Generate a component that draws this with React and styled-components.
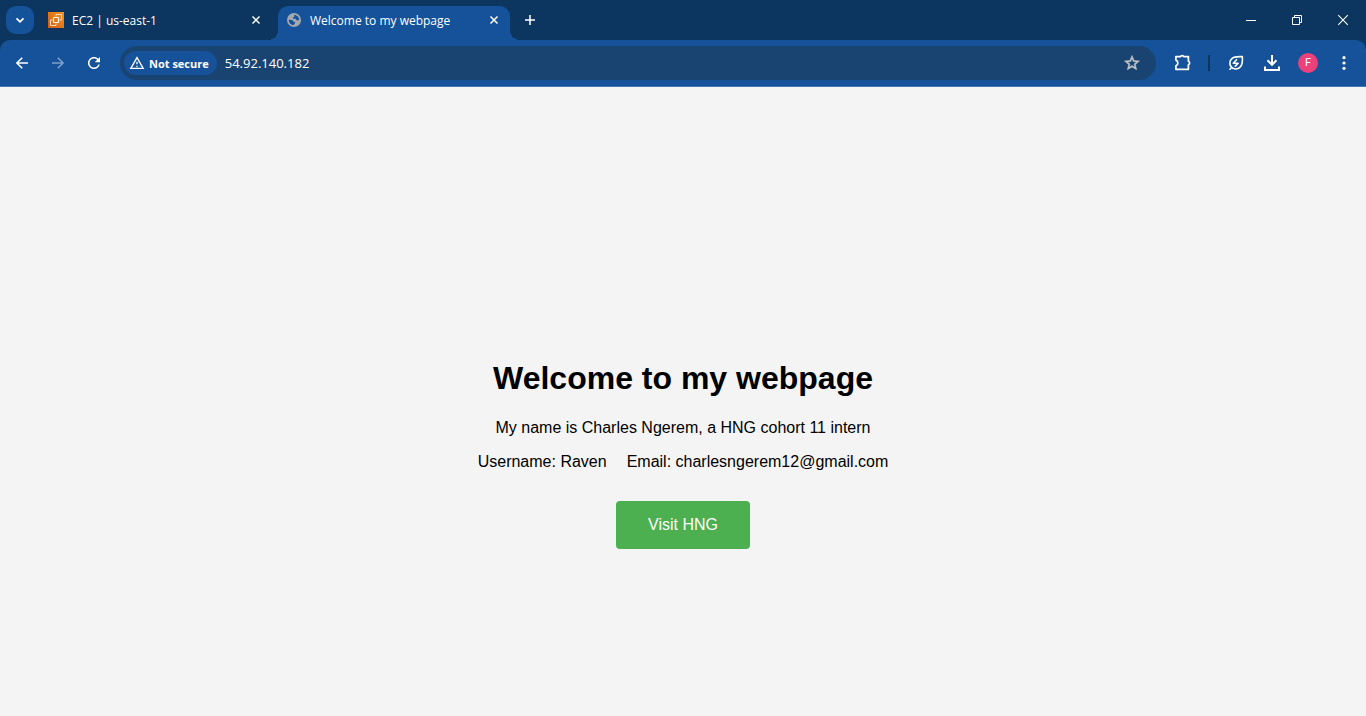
import React from "react";
import styled, { createGlobalStyle } from "styled-components";

const colors = {
  frame: "#0c355f",
  toolbar: "#155299",
  field: "#194471",
  line: "#4478b1",
  page: "#f4f4f4",
  green: "#4caf50",
};

const GlobalStyle = createGlobalStyle`
  * { box-sizing: border-box; }
  body { margin: 0; background: ${colors.page}; }
  button, input { font: inherit; color: inherit; border: 0; background: none; padding: 0; }
  button { cursor: pointer; }
`;

const Browser = styled.div`
  min-height: 100vh;
  display: flex;
  flex-direction: column;
  font-family: "Open Sans", "Noto Sans", sans-serif;
  font-size: 12px;
  color: #fff;
`;

const TabStrip = styled.header`
  display: flex;
  align-items: flex-end;
  height: 40px;
  padding-left: 6px;
  background: ${colors.frame};
`;

const TabSearch = styled.button`
  display: grid;
  place-items: center;
  width: 28px;
  height: 28px;
  margin: 0 6px 6px 0;
  border-radius: 10px;
  background: ${colors.toolbar};
`;

const TabList = styled.nav`
  display: flex;
  gap: 6px;
  min-width: 0;
`;

const Tab = styled.div`
  position: relative;
  display: flex;
  align-items: center;
  gap: 8px;
  width: 232px;
  height: 34px;
  padding: 0 8px 6px;
  border-radius: 10px 10px 0 0;
  background: ${(p) => (p.$active ? colors.toolbar : "transparent")};

  &::before,
  &::after {
    content: ${(p) => (p.$active ? '""' : "none")};
    position: absolute;
    bottom: 0;
    width: 10px;
    height: 10px;
  }
  &::before {
    left: -10px;
    background: radial-gradient(circle at 0 0, transparent 10px, ${colors.toolbar} 10px);
  }
  &::after {
    right: -10px;
    background: radial-gradient(circle at 100% 0, transparent 10px, ${colors.toolbar} 10px);
  }
`;

const TabTitle = styled.button`
  flex: 1;
  min-width: 0;
  overflow: hidden;
  padding-top: 2px;
  text-align: left;
  white-space: nowrap;
  line-height: 18px;
`;

const SmallButton = styled.button`
  display: grid;
  place-items: center;
  width: 16px;
  height: 16px;
`;

const NewTab = styled.button`
  display: grid;
  place-items: center;
  width: 28px;
  height: 28px;
  margin: 0 0 6px 6px;
`;

const WindowControls = styled.div`
  display: flex;
  margin-left: auto;
  align-self: stretch;
`;

const WindowButton = styled.button`
  display: grid;
  place-items: center;
  width: 46px;
  height: 40px;
`;

const ToolbarFrame = styled.div`
  background: ${colors.frame};
`;

const Toolbar = styled.div`
  display: flex;
  align-items: center;
  height: 47px;
  padding: 0 4px;
  border-bottom: 1px solid ${colors.line};
  border-radius: 10px 10px 0 0;
  background: ${colors.toolbar};
`;

const ToolButton = styled.button`
  display: grid;
  place-items: center;
  flex: none;
  width: 36px;
  height: 34px;
  opacity: ${(p) => (p.disabled ? 0.45 : 1)};
`;

const AddressBar = styled.form`
  display: flex;
  align-items: center;
  flex: 1;
  min-width: 0;
  height: 34px;
  margin: 0 9px 0 8px;
  padding: 0 6px 0 4px;
  border-radius: 17px;
  background: ${colors.field};
`;

const SecurityChip = styled.button`
  display: flex;
  align-items: center;
  gap: 4px;
  flex: none;
  height: 24px;
  padding: 0 8px 0 5px;
  border-radius: 12px;
  background: ${colors.toolbar};
  font-size: 11px;
  font-weight: 700;
`;

const AddressInput = styled.input`
  flex: 1;
  min-width: 0;
  margin-left: 8px;
  font-size: 13px;
  line-height: 18px;
  outline: none;
`;

const Divider = styled.span`
  width: 2px;
  height: 16px;
  margin: 0 8px 0 7px;
  background: ${colors.frame};
`;

const Avatar = styled.span`
  display: grid;
  place-items: center;
  width: 20px;
  height: 20px;
  border-radius: 50%;
  background: #ec407a;
  font: 11px/20px Roboto, sans-serif;
`;

const Page = styled.main`
  flex: 1;
  display: flex;
  flex-direction: column;
  align-items: center;
  justify-content: center;
  padding-top: 105px;
  background: ${colors.page};
  color: #000;
  font: 16px/18px "Liberation Sans", Arial, sans-serif;
  text-align: center;
`;

const Heading = styled.h1`
  margin: 0 0 23px;
  font-size: 32px;
  line-height: 36px;
`;

const Text = styled.p`
  margin: 0 0 16px;
`;

const Details = styled.div`
  display: flex;
  flex-wrap: wrap;
  justify-content: center;
  column-gap: 20px;
`;

const VisitLink = styled.a`
  margin-top: 14px;
  padding: 15px 32px;
  border-radius: 4px;
  background: ${colors.green};
  color: #fff;
  text-decoration: none;
`;

function StrokeIcon({ size = 20, width = 2, d, ...rest }) {
  return (
    <svg width={size} height={size} viewBox={`0 0 ${size} ${size}`} fill="none" stroke="currentColor" strokeWidth={width} aria-hidden="true" {...rest}>
      <path d={d} />
    </svg>
  );
}

function FillIcon({ size, d, color = "currentColor", ...rest }) {
  return (
    <svg width={size} height={size} viewBox="0 0 24 24" fill={color} aria-hidden="true" {...rest}>
      <path d={d} />
    </svg>
  );
}

const paths = {
  reload:
    "M17.65 6.35C16.2 4.9 14.21 4 12 4c-4.42 0-7.99 3.58-7.99 8s3.57 8 7.99 8c3.73 0 6.84-2.55 7.73-6h-2.08c-.82 2.33-3.04 4-5.65 4-3.31 0-6-2.69-6-6s2.69-6 6-6c1.66 0 3.14.69 4.22 1.78L13 11h7V4l-2.35 2.35z",
  warning: "M12 5.99L19.53 19H4.47L12 5.99M12 2L1 21h22L12 2zm1 14h-2v2h2v-2zm0-6h-2v4h2v-4z",
  star: "M22 9.24l-7.19-.62L12 2 9.19 8.63 2 9.24l5.46 4.73L5.82 21 12 17.27 18.18 21l-1.63-7.03L22 9.24zM12 15.4l-3.76 2.27 1-4.28-3.32-2.88 4.38-.38L12 6.1l1.71 4.04 4.38.38-3.32 2.88 1 4.28L12 15.4z",
};

function Ec2Icon() {
  return (
    <svg width="16" height="16" viewBox="0 0 16 16" fill="none" aria-hidden="true">
      <defs>
        <linearGradient id="ec2" x1="0" y1="1" x2="1" y2="0">
          <stop offset="0" stopColor="#d05c17" />
          <stop offset="1" stopColor="#f7931d" />
        </linearGradient>
      </defs>
      <path fill="url(#ec2)" d="M0 0h16v16H0z" />
      <path stroke="#f9d9b8" d="M8 4.500V2.500h5.500V8h-2M4.500 8h-2v5.500H8v-2" />
      <rect x="5.500" y="5.500" width="5" height="5" rx=".5" stroke="#fff1e2" strokeWidth="1.200" />
    </svg>
  );
}

function GlobeIcon() {
  return (
    <svg width="16" height="16" viewBox="0 0 16 16" aria-hidden="true">
      <circle cx="8" cy="8" r="7" fill="#a3a8af" />
      <path
        fill={colors.toolbar}
        d="M8.200 2.700c2.600.1 4.800 2.100 5.100 4.700l-1.500 1.100-1.400-.3-.5-1.400H7.300L6.900 5.400l1.600-.8zM2.700 7.800l3.700.3.700 1.500 2 .5-.3 1.500-1.600 1.600C4.700 12.900 2.700 10.700 2.700 7.800z"
      />
    </svg>
  );
}

const Close = () => <StrokeIcon size={16} width={1.5} d="M4.500 4.500l7 7M11.500 4.500l-7 7" />;

export default function App() {
  return (
    <>
      <GlobalStyle />
      <Browser>
        <TabStrip>
          <TabSearch aria-label="Search tabs">
            <StrokeIcon size={16} width={1.8} d="M4.500 6.300L8 9.800l3.500-3.500" />
          </TabSearch>
          <TabList>
            <Tab>
              <Ec2Icon />
              <TabTitle>EC2 | us-east-1</TabTitle>
              <SmallButton aria-label="Close tab"><Close /></SmallButton>
            </Tab>
            <Tab $active>
              <GlobeIcon />
              <TabTitle>Welcome to my webpage</TabTitle>
              <SmallButton aria-label="Close tab"><Close /></SmallButton>
            </Tab>
          </TabList>
          <NewTab aria-label="New tab">
            <StrokeIcon size={16} width={1.5} d="M8 3v10M3 8h10" />
          </NewTab>
          <WindowControls>
            <WindowButton aria-label="Minimize">
              <StrokeIcon size={16} width={1} d="M3 8.500h10" />
            </WindowButton>
            <WindowButton aria-label="Restore">
              <StrokeIcon size={16} width={1} d="M3.500 5.500h7v7h-7zM5.500 5.500v-2h7v7h-2" />
            </WindowButton>
            <WindowButton aria-label="Close window">
              <StrokeIcon size={16} width={1.1} d="M3.200 3.200l9.600 9.600M12.800 3.200l-9.600 9.600" />
            </WindowButton>
          </WindowControls>
        </TabStrip>
        <ToolbarFrame>
          <Toolbar>
            <ToolButton aria-label="Back">
              <StrokeIcon size={16} width={1.6} d="M14 8H3M8.200 2.700L2.900 8l5.300 5.300" />
            </ToolButton>
            <ToolButton aria-label="Forward" disabled>
              <StrokeIcon size={16} width={1.6} d="M2 8h11M7.800 2.700L13.100 8l-5.300 5.300" />
            </ToolButton>
            <ToolButton aria-label="Reload">
              <FillIcon size={18} d={paths.reload} />
            </ToolButton>
            <AddressBar onSubmit={(e) => e.preventDefault()}>
              <SecurityChip type="button">
                <FillIcon size={16} d={paths.warning} />
                Not secure
              </SecurityChip>
              <AddressInput aria-label="Address" defaultValue="54.92.140.182" />
              <ToolButton type="button" aria-label="Bookmark this page">
                <FillIcon size={18} d={paths.star} color="#c3c6ca" stroke="#c3c6ca" strokeWidth="0.700" />
              </ToolButton>
            </AddressBar>
            <ToolButton aria-label="Extensions">
              <StrokeIcon
                width={1.7}
                strokeLinejoin="round"
                d="M2.900 3.600H7.500a1.800 1.600 0 0 1 3.400 0h4.500v4.700a1.800 1.800 0 0 1 0 3.400v4.600H2.900v-3.400c2.600-.8 2.600-5 0-5.800z"
              />
            </ToolButton>
            <Divider />
            <ToolButton aria-label="Energy saver">
              <StrokeIcon
                width={1.6}
                strokeLinejoin="round"
                d="M16.300 3.600c.4 4.400.3 7.400-1.600 9.800-2.400 3-6.600 3.400-9 1-2.600-2.600-2.500-6.800.5-9.100C9 3.300 12 3.800 16.300 3.600zM3.500 16.700l2.300-2.300M11 6.300l-3.700 3.900h4.800L8.800 13.600"
              />
            </ToolButton>
            <ToolButton aria-label="Downloads">
              <StrokeIcon d="M10 2v9M5.500 7.300L10 11.800l4.500-4.500M3 13.500V17h14v-3.500" />
            </ToolButton>
            <ToolButton aria-label="Profile"><Avatar>F</Avatar></ToolButton>
            <ToolButton aria-label="Browser menu">
              <svg width="20" height="20" viewBox="0 0 20 20" fill="currentColor" aria-hidden="true">
                <circle cx="10" cy="4.700" r="1.600" />
                <circle cx="10" cy="10" r="1.600" />
                <circle cx="10" cy="15.300" r="1.600" />
              </svg>
            </ToolButton>
          </Toolbar>
        </ToolbarFrame>
        <Page>
          <Heading>Welcome to my webpage</Heading>
          <Text>My name is Charles Ngerem, a HNG cohort 11 intern</Text>
          <Details>
            <Text>Username: Raven</Text>
            <Text>Email: charlesngerem12@gmail.com</Text>
          </Details>
          <VisitLink href="#">Visit HNG</VisitLink>
        </Page>
      </Browser>
    </>
  );
}
